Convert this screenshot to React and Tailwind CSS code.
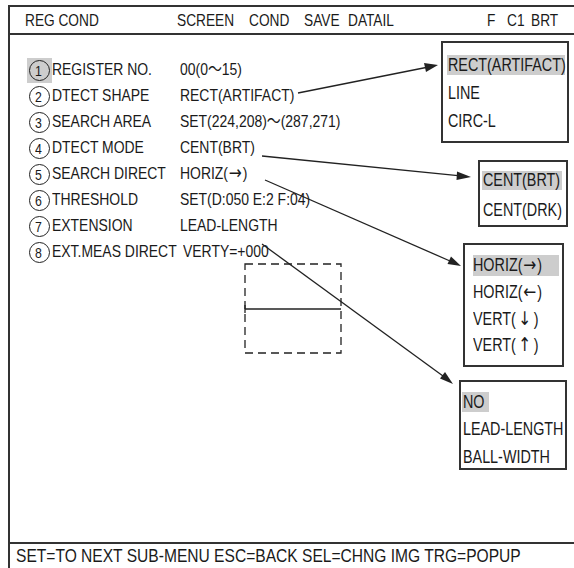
import React from "react";

const FONT = { fontFamily: '"Liberation Sans Narrow", "Liberation Sans", "Noto Sans CJK JP", sans-serif' };
const ARW_FONT = { fontFamily: '"DejaVu Sans", "Noto Sans CJK JP", sans-serif' };

function T({ children, className = "" }) {
  return (
    <span className={`inline-block origin-left scale-x-[0.82] whitespace-nowrap ${className}`}>{children}</span>
  );
}

const A = ({ c, pad }) => (
  <span className={`text-[19px] leading-none ${pad ? "px-[3px]" : "px-[1px]"}`} style={ARW_FONT}>
    {c + "\uFE0E"}
  </span>
);

const rows = [
  ["1", "REGISTER NO.", "00(0～15)", true],
  ["2", "DTECT SHAPE", "RECT(ARTIFACT)"],
  ["3", "SEARCH AREA", "SET(224,208)～(287,271)"],
  ["4", "DTECT MODE", "CENT(BRT)"],
  ["5", "SEARCH DIRECT", <>HORIZ(<A c="→" />)</>],
  ["6", "THRESHOLD", "SET(D:050 E:2 F:04)"],
  ["7", "EXTENSION", "LEAD-LENGTH"],
  ["8", "EXT.MEAS DIRECT", "VERTY=+000"],
];

function Row({ n, label, value, hl }) {
  return (
    <div className="flex items-center h-[26px]">
      <div className={`shrink-0 w-[25px] h-[25px] flex items-center justify-center ${hl ? "bg-[#cdcdcd]" : ""}`}>
        <div className="w-[21px] h-[21px] rounded-full border border-[#222] flex items-center justify-center text-[15px] leading-none">
          <T className="scale-x-[0.9] origin-center">{n}</T>
        </div>
      </div>
      <div className={`shrink-0 ${n === "8" ? "w-[131px]" : "w-[128px]"}`}>
        <T>{label}</T>
      </div>
      <div className="shrink-0">
        <T>{value}</T>
      </div>
    </div>
  );
}

function Popup({ className, items, pt, itemH, hl }) {
  return (
    <div className={`absolute border-2 border-[#333] bg-white text-[17.5px] ${className}`}>
      <div className={`flex flex-col ${pt}`}>
        {items.map((t, i) => (
          <div key={i} className={`${itemH} flex items-center`}>
            <div className={`flex items-center ${hl.ml} ${i === 0 ? `${hl.w} ${hl.h} bg-[#cdcdcd]` : ""}`}>
              <div className={hl.pl}>
                <T>{t}</T>
              </div>
            </div>
          </div>
        ))}
      </div>
    </div>
  );
}

export default function App() {
  return (
    <div className="relative w-[574px] h-[568px] overflow-hidden bg-white text-[#1a1a1a] text-[17px]" style={FONT}>
      <div className="ml-[8px] mt-[5px] w-[600px] border-t-2 border-l-2 border-[#333] flex flex-col">
        <div className="h-[28px] border-b-2 border-[#333] flex items-center text-[16.5px]">
          <span className="shrink-0 ml-[15px] w-[152px]"><T className="scale-x-[0.83]">REG COND</T></span>
          <span className="shrink-0 w-[72px]"><T className="scale-x-[0.83]">SCREEN</T></span>
          <span className="shrink-0 w-[55px]"><T className="scale-x-[0.83]">COND</T></span>
          <span className="shrink-0 w-[44px]"><T className="scale-x-[0.83]">SAVE</T></span>
          <span className="shrink-0 w-[139px]"><T className="scale-x-[0.83]">DATAIL</T></span>
          <span className="shrink-0 w-[20px]"><T className="scale-x-[0.83]">F</T></span>
          <span className="shrink-0 w-[24px]"><T className="scale-x-[0.83]">C1</T></span>
          <span className="shrink-0"><T className="scale-x-[0.83]">BRT</T></span>
        </div>
        <div className="h-[507px] pt-[22px] pl-[17px]">
          {rows.map(([n, l, v, hl]) => (
            <Row key={n} n={n} label={l} value={v} hl={hl} />
          ))}
        </div>
        <div className="border-t-2 border-[#333] h-[26px] flex items-center pl-[6px] text-[19px]">
          <T>SET=TO NEXT SUB-MENU ESC=BACK SEL=CHNG IMG TRG=POPUP</T>
        </div>
      </div>

      <svg className="absolute inset-0 pointer-events-none" width="574" height="568" viewBox="0 0 574 568">
        <g stroke="#222" strokeWidth="1.3" fill="none">
          <line x1="298" y1="93" x2="426" y2="67.5" />
          <line x1="262" y1="156" x2="458" y2="175.7" />
          <line x1="265" y1="180" x2="450" y2="261" />
          <line x1="262" y1="244" x2="443" y2="376" />
          <rect x="245" y="264" width="96" height="89" strokeDasharray="8 5" />
          <line x1="245" y1="309" x2="341" y2="309" />
          <line x1="245" y1="305" x2="245" y2="313" />
        </g>
        <g fill="#222">
          <polygon points="438,65 424,63 426,72" />
          <polygon points="471,177 457,171.5 456.5,180" />
          <polygon points="461,266 451,256.5 447.5,264" />
          <polygon points="453,384 445,372 440,378.5" />
        </g>
      </svg>

      <Popup
        className="left-[441px] top-[41px] w-[128px] h-[102px]"
        items={["RECT(ARTIFACT)", "LINE", "CIRC-L"]}
        pt="pt-[8px]"
        itemH="h-[28px]"
        hl={{ ml: "ml-[4px]", w: "w-[118px]", h: "h-[20px]", pl: "pl-[1px]" }}
      />
      <Popup
        className="left-[478px] top-[160px] w-[90px] h-[67px]"
        items={["CENT(BRT)", "CENT(DRK)"]}
        pt="pt-[3px]"
        itemH="h-[30px]"
        hl={{ ml: "ml-[2px]", w: "w-[80px]", h: "h-[19px]", pl: "pl-[1px]" }}
      />
      <Popup
        className="left-[463px] top-[243px] w-[101px] h-[124px]"
        items={[
          <>HORIZ(<A c="→" />)</>,
          <>HORIZ(<A c="←" />)</>,
          <>VERT(<A c="↓" pad />)</>,
          <>VERT(<A c="↑" pad />)</>,
        ]}
        pt="pt-[7px]"
        itemH="h-[26.7px]"
        hl={{ ml: "ml-[8px]", w: "w-[86px]", h: "h-[21px]", pl: "pl-0" }}
      />
      <Popup
        className="left-[459px] top-[380px] w-[108px] h-[90px]"
        items={["NO", "LEAD-LENGTH", "BALL-WIDTH"]}
        pt="pt-[6px]"
        itemH="h-[27.5px]"
        hl={{ ml: "ml-[1px]", w: "w-[27px]", h: "h-[20px]", pl: "pl-[1px]" }}
      />
    </div>
  );
}
